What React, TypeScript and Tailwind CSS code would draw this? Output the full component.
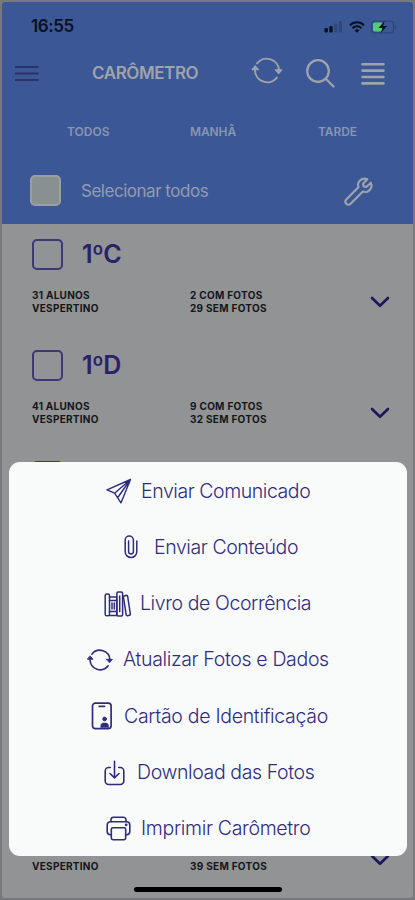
import React from "react";

const CLASSES = [
  { name: "1ºC", students: 31, withPhoto: 2, withoutPhoto: 29 },
  { name: "1ºD", students: 41, withPhoto: 9, withoutPhoto: 32 },
];

const RefreshIcon = ({ className }: { className: string }) => (
  <svg viewBox="0 0 30 28" fill="none" stroke="currentColor" strokeWidth="1.9" strokeLinecap="round" className={className}>
    <path d="M5.5 7.2A11.8 11.8 0 0 1 26.6 14M24.5 20.8A11.8 11.8 0 0 1 3.4 14" />
    <path d="M22.8 13.2h6.6l-3.1 3.8zM.6 13.2h6.2L3.6 9.4z" fill="currentColor" strokeWidth="1" strokeLinejoin="round" />
  </svg>
);

const iconProps = {
  fill: "none",
  stroke: "currentColor",
  strokeWidth: 1.6,
  strokeLinecap: "round" as const,
  strokeLinejoin: "round" as const,
};

const SendIcon = () => (
  <svg width="26" height="26" viewBox="0 0 26 26" {...iconProps} strokeWidth={1.4}>
    <path d="M24.5 1.5 1 11.8l7.6 3.4L15 24.8zM24.5 1.5 8.6 15.2M24.5 1.5 11.8 19.5" />
  </svg>
);

const ClipIcon = () => (
  <svg width="14" height="24" viewBox="0 0 14 24" {...iconProps} strokeWidth={1.5}>
    <path d="M12.8 6v10.8a5.8 5.8 0 0 1-11.6 0V5.2a4.1 4.1 0 0 1 8.2 0v11.4a2.4 2.4 0 0 1-4.8 0V6" />
  </svg>
);

const BooksIcon = () => (
  <svg width="28" height="26" viewBox="0 0 28 26" {...iconProps} strokeWidth={1.5}>
    <rect x="1.2" y="3" width="4.3" height="21.8" rx="1.6" />
    <path d="M5.5 6h7.2v18.5H5.5M5.5 9.5h7.2M5.5 20.5h7.2M8 12v6M10.3 12v6" />
    <rect x="12.9" y="1" width="5.7" height="24" rx="1.3" />
    <path d="M15.7 5v15.5M19.5 5.2l3.1-.9c.6 0 .9.3 1 .9l2.8 18.1c0 .6-.2.9-.8 1l-2.4.4c-.6 0-.9-.3-1-.8L19.3 5.2" />
  </svg>
);

const CardIcon = () => (
  <svg width="22" height="28" viewBox="0 0 22 28" {...iconProps} strokeWidth={1.7}>
    <rect x="1.5" y="1.2" width="18.6" height="25.4" rx="2.8" />
    <path d="M8.2 4.3h5.3" />
    <circle cx="13.6" cy="17" r="1.9" fill="currentColor" strokeWidth="0.8" />
    <path d="M9.8 25.5v-1.7c0-1.6 1.2-2.7 2.7-2.7h2.3c1.5 0 2.7 1.1 2.7 2.7v1.7z" fill="currentColor" strokeWidth="0.6" />
  </svg>
);

const DownloadIcon = () => (
  <svg width="21" height="26" viewBox="0 0 21 26" {...iconProps}>
    <path d="M6.3 7.5H4.7a3.5 3.5 0 0 0-3.5 3.5v10a3.5 3.5 0 0 0 3.5 3.5h11.6a3.5 3.5 0 0 0 3.5-3.5V11a3.5 3.5 0 0 0-3.5-3.5h-1.6M10.5 1.2v16.5M6 13.5l4.5 4.3 4.5-4.3" />
  </svg>
);

const PrinterIcon = () => (
  <svg width="25" height="25" viewBox="0 0 25 25" {...iconProps}>
    <path d="M5.3 18.7H4.4a3.2 3.2 0 0 1-3.2-3.2V8.9a3.2 3.2 0 0 1 3.2-3.2h16.2a3.2 3.2 0 0 1 3.2 3.2v6.6a3.2 3.2 0 0 1-3.2 3.2h-.9" />
    <rect x="5.3" y="11.7" width="14.4" height="12" rx="1.6" />
    <path d="M5 5.6V3.8a2.6 2.6 0 0 1 2.6-2.6h9.8A2.6 2.6 0 0 1 20 3.8v1.8" />
    <circle cx="20.2" cy="8.8" r="0.6" fill="currentColor" />
  </svg>
);

const ACTIONS = [
  { label: "Enviar Comunicado", icon: <SendIcon />, row: "pl-[97px] gap-[9px]", text: "tracking-[-0.44px]" },
  { label: "Enviar Conteúdo", icon: <ClipIcon />, row: "pl-[115px] gap-[16px]", text: "tracking-[-0.42px]" },
  { label: "Livro de Ocorrência", icon: <BooksIcon />, row: "pl-[95px] gap-[8px]", text: "tracking-[-0.4px]" },
  { label: "Atualizar Fotos e Dados", icon: <RefreshIcon className="h-[24px] w-[26px]" />, row: "pl-[78px] gap-[10px]", text: "tracking-[-0.34px]" },
  { label: "Cartão de Identificação", icon: <CardIcon />, row: "pl-[82px] gap-[11px]", text: "tracking-[-0.3px]" },
  { label: "Download das Fotos", icon: <DownloadIcon />, row: "pl-[95px] gap-[12px]", text: "tracking-[-0.39px]" },
  { label: "Imprimir Carômetro", icon: <PrinterIcon />, row: "pl-[97px] gap-[10px]", text: "tracking-[-0.32px]" },
];

const StatusBar = () => (
  <div className="flex h-[46px] items-center justify-between pl-[29px] pr-[16px] pt-[3px] text-[#09101f]">
    <span className="text-[17px] font-semibold tracking-[-0.4px]">16:55</span>
    <div className="flex items-center gap-[6px]">
      <svg width="19" height="12" viewBox="0 0 19 12" fill="currentColor">
        <rect x="0.5" y="7" width="3.4" height="4.5" rx="1" />
        <rect x="5.3" y="5" width="3.4" height="6.5" rx="1" />
        <rect x="10.1" y="2.5" width="3.2" height="9" rx="1" opacity="0.22" />
        <rect x="14.8" y="0" width="3.2" height="11.5" rx="1" opacity="0.22" />
      </svg>
      <svg width="16" height="12" viewBox="0 0 16 12" fill="none" stroke="currentColor" strokeWidth="2">
        <path d="M1 4.2a10 10 0 0 1 14 0M3.5 7.2a6.3 6.3 0 0 1 9 0" />
        <path d="M8 11.7 5.6 9.3a3.5 3.5 0 0 1 4.8 0z" fill="currentColor" stroke="none" />
      </svg>
      <svg width="26" height="14" viewBox="0 0 26 14">
        <rect x="0.7" y="1.2" width="22" height="11.6" rx="3.3" fill="none" stroke="#2f4679" strokeWidth="1.2" />
        <path d="M24 5c1.5.5 1.5 3.5 0 4z" fill="#2f4679" />
        <rect x="2" y="2.5" width="9.5" height="9" rx="1.8" fill="#57c878" />
        <path d="M13.7.8 7.5 8h4l-2 5.3L16 6h-4z" fill="#09101f" />
      </svg>
    </div>
  </div>
);

const Header = () => (
  <header className="h-[222px] shrink-0 bg-[#3c5796] text-[#a0a3ab]">
    <StatusBar />
    <div className="flex h-[52px] items-center pl-[13px]">
      <svg width="24" height="17" viewBox="0 0 24 17" stroke="#2b3269" strokeWidth="2" className="-mt-[1px]">
        <path d="M0 2h23.5M0 8.5h23.5M0 15h23.5" />
      </svg>
      <h1 className="ml-[53px] w-[109px] whitespace-nowrap text-[17px] font-semibold tracking-[-0.42px]">CARÔMETRO</h1>
      <RefreshIcon className="-mt-[8px] ml-[50px] h-[29px] w-[32px]" />
      <svg width="29" height="29" viewBox="0 0 29 29" fill="none" stroke="currentColor" strokeWidth="2.2" strokeLinecap="round" className="-mt-[1px] ml-[23px]">
        <circle cx="12" cy="12" r="10.8" />
        <path d="m19.8 19.8 7.7 7.7" />
      </svg>
      <svg width="24" height="24" viewBox="0 0 24 24" stroke="currentColor" strokeWidth="2.6" strokeLinecap="round" className="-mt-[1px] ml-[26px]">
        <path d="M1.5 2.2h21M1.5 8.6h21M1.5 15h21M1.5 21.4h21" />
      </svg>
    </div>
    <nav className="flex h-[64px] items-center pl-[65px] text-[12px] font-semibold text-[#8995b1]">
      <span className="w-[123px]">TODOS</span>
      <span className="w-[128px] tracking-[-0.1px]">MANHÃ</span>
      <span className="tracking-[-0.1px]">TARDE</span>
    </nav>
    <div className="flex h-[54px] items-center pl-[28px]">
      <span className="-mt-[1px] size-[31px] rounded-[5px] border-[2px] border-[#9a9fa3] bg-[#889091]" />
      <span className="ml-[20px] mt-[2px] w-[150px] whitespace-nowrap text-[17px] tracking-[-0.48px] text-[#929caf]">Selecionar todos</span>
      <svg width="32" height="32" viewBox="0 0 24 24" fill="none" stroke="currentColor" strokeWidth="1.6" strokeLinejoin="round" className="ml-[112px] mt-[2px]">
        <path d="M20.9 5.1 17.5 8.3l-2-.5-.5-2 3.3-3.4c-2-.8-4.2-.4-5.6 1-1.4 1.4-1.7 3.3-1.1 5L2.4 17.6a2.3 2.3 0 0 0 3.3 3.3l9.2-9.2c1.7.6 3.7.2 5-1.1 1.5-1.5 1.8-3.6 1-5.5z" />
      </svg>
    </div>
  </header>
);

const Checkbox = () => <span className="block size-[31px] rounded-[5px] border-2 border-[#3b3877]" />;

const ClassDetails = ({ left, right }: { left: string[]; right: string[] }) => (
  <div className="flex text-[10px] font-bold leading-[13px] text-[#15161a]">
    <div className="w-[158px] tracking-[0.27px]">
      {left.map((line) => (
        <p key={line}>{line}</p>
      ))}
    </div>
    <div className="w-[180px] tracking-[0.29px]">
      {right.map((line) => (
        <p key={line}>{line}</p>
      ))}
    </div>
    <svg width="20" height="12" viewBox="0 0 20 12" fill="none" stroke="#1c175c" strokeWidth="2.6" strokeLinecap="round" strokeLinejoin="round" className="-mt-[8px] mb-[7px] self-end">
      <path d="m2 2 8 7.8L18 2" />
    </svg>
  </div>
);

const App = () => {
  return (
    <main className="relative h-[900px] w-[415px] overflow-hidden bg-[#77797c] px-[2px] py-[2px] font-['Inter',sans-serif]">
      <div className="flex h-[896px] flex-col overflow-hidden rounded-[3px] bg-[#919395]">
        <Header />
        {CLASSES.map((item) => (
          <section key={item.name} className="h-[111.4px] shrink-0 pl-[30px] pt-[14px]">
            <div className="mb-[19px] flex h-[32px] items-center">
              <Checkbox />
              <h2 className="ml-[19px] text-[25px] font-semibold leading-8 tracking-[-0.5px] text-[#282368]">{item.name}</h2>
            </div>
            <ClassDetails
              left={[`${item.students} ALUNOS`, "VESPERTINO"]}
              right={[`${item.withPhoto} COM FOTOS`, `${item.withoutPhoto} SEM FOTOS`]}
            />
          </section>
        ))}
        <section className="flex flex-1 flex-col justify-between pb-[25px] pl-[30px] pt-[14px]">
          <Checkbox />
          <ClassDetails left={["VESPERTINO"]} right={["39 SEM FOTOS"]} />
        </section>
      </div>

      <div className="absolute left-[9px] top-[462px] flex h-[394px] w-[398px] flex-col rounded-[11px] bg-[#f9fafa] text-[#302c7c]">
        {ACTIONS.map((action) => (
          <button key={action.label} className={`flex flex-1 items-center pt-[2px] text-left ${action.row}`}>
            <span className="shrink-0">{action.icon}</span>
            <span className={`whitespace-nowrap text-[19.5px] font-light ${action.text}`}>{action.label}</span>
          </button>
        ))}
      </div>

      <div className="absolute bottom-[8px] left-[134px] h-[5px] w-[148px] rounded-full bg-black" />
    </main>
  );
};

export default App;
